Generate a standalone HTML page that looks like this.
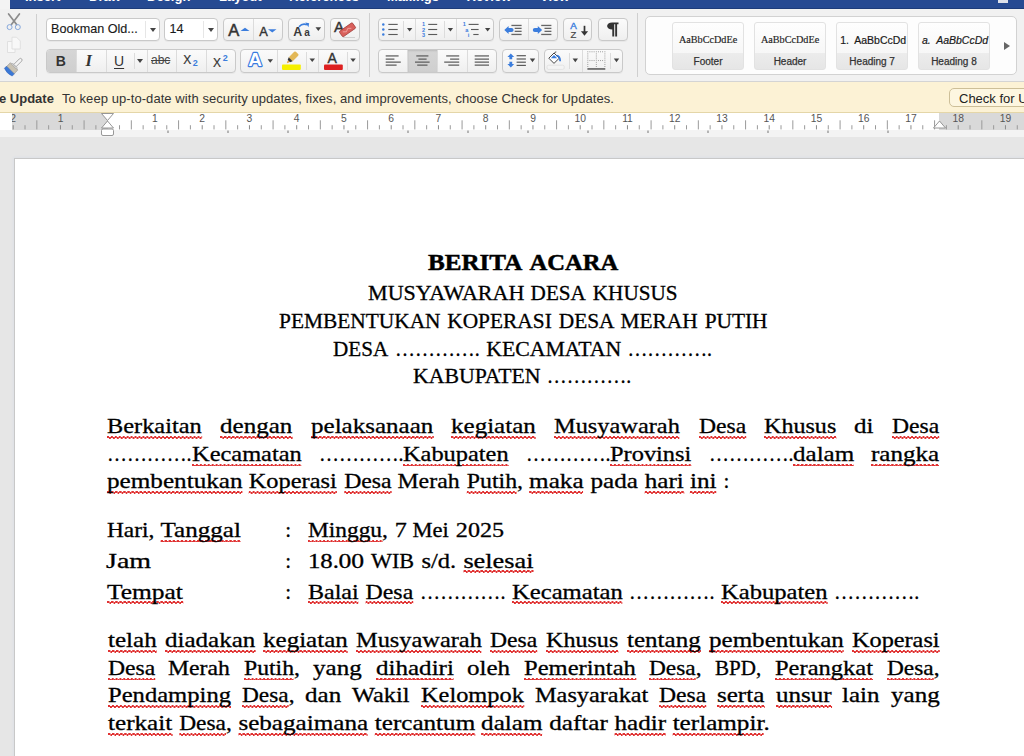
<!DOCTYPE html>
<html><head><meta charset="utf-8">
<style>
*{box-sizing:border-box}
html,body{margin:0;padding:0}
body{width:1024px;height:756px;overflow:hidden;position:relative;background:#e6e6e6;font-family:"Liberation Sans",sans-serif}
.a{position:absolute}
#topl{left:0;top:0;width:10px;height:9px;background:#f3f3f3}
#top{left:10px;top:0;width:1014px;height:9px;background:#264a92;border-bottom:1px solid #1d3c7a;overflow:hidden}
#top span{position:absolute;top:-11.2px;color:#fff;font-size:13px;font-weight:bold}
#ribbon{left:0;top:9px;width:1024px;height:73px;background:#f1f1f1;border-bottom:1px solid #d4d4d4}
.btn{position:absolute;border:1px solid #c9c9c9;border-radius:4px;background:linear-gradient(#fbfbfb,#efefef);box-shadow:0 1px 0 rgba(0,0,0,0.04)}
.sep{position:absolute;width:1px;background:#dcdcdc}
.vsep{position:absolute;width:1px;background:#cfcfcf}
.pressed{position:absolute;background:linear-gradient(#d6d6d6,#cfcfcf)}
#update{left:0;top:82px;width:1024px;height:31px;background:#fcf2d5;border-bottom:1px solid #e4d6a8}
#ruler{left:0;top:113px;width:1024px;height:17px;background:#fff}
#band{z-index:-0;left:0;top:130px;width:1024px;height:7px;background:#f3f3f3}
#page{left:14px;top:158px;width:1020px;height:600px;background:#fff;border-left:1px solid #c8c8c8;border-top:1px solid #c8c8c8;box-shadow:-1px -1px 2px #dde1e6}
.rt{font-family:"Liberation Sans",sans-serif;white-space:nowrap;line-height:1}
.arr{position:absolute;width:0;height:0;border-left:3.5px solid transparent;border-right:3.5px solid transparent;border-top:4px solid #444}
.dl{position:absolute;display:flex;white-space:nowrap;font-family:"Liberation Serif",serif;color:#000;-webkit-text-stroke:0.3px #000}
.dl b{display:flex;font-weight:inherit;flex:none}
.dl s{display:block;text-decoration:none;flex:none}
.dl i{display:inline-block;font-style:normal;transform-origin:0 50%}
.dl u{text-decoration:none;padding-bottom:0.3px;background:linear-gradient(90deg,#e03333 50%,transparent 50%) 0 calc(100% - 1.2px)/3.4px 1.5px repeat-x,linear-gradient(90deg,transparent 50%,#e03333 50%) 0 calc(100% - 0.2px)/3.4px 1.5px repeat-x}
.ln{position:absolute;font-family:"Liberation Serif",serif;font-size:21px;line-height:24px;white-space:nowrap;color:#000;transform-origin:0 0}
</style></head><body>
<div class="a" id="topl"></div>
<div class="a" id="top">
 <span style="left:15px">Insert</span>
 <span style="left:79px">Draw</span>
 <span style="left:137px">Design</span>
 <span style="left:209px">Layout</span>
 <span style="left:279px">References</span>
 <span style="left:377px">Mailings</span>
 <span style="left:456.5px">Review</span>
 <span style="left:530px">View</span>
 <i style="position:absolute;left:988px;top:0;width:10px;height:2.7px;background:#dde1ea"></i>
</div>
<div class="a" id="ribbon"></div>
<!-- clipboard -->
<svg class="a" style="left:0;top:9px" width="40" height="72" viewBox="0 9 40 72">
 <path d="M8.6 14 L16.6 24.6" stroke="#8c8c8c" stroke-width="1.7" stroke-linecap="round"/>
 <path d="M19.4 14 L11.4 24.6" stroke="#8c8c8c" stroke-width="1.7" stroke-linecap="round"/>
 <circle cx="9.6" cy="27.1" r="2.5" fill="none" stroke="#86a8dc" stroke-width="1"/>
 <circle cx="17.8" cy="27.1" r="2.5" fill="none" stroke="#86a8dc" stroke-width="1"/>
 <g fill="#f8f8f8" stroke="#dedede" stroke-width="0.9"><path d="M7.5 41.5h7.5v11h-7.5z"/><path d="M12 37.2h4.5l3.8 3.8v8h-8.3z"/></g>
 <g transform="translate(12 68.5) rotate(45)">
  <path d="M-5.5 2 h11 v3.2 q-5.5 2.2 -11 0z" fill="#3a78d6" stroke="#2c60b8" stroke-width="0.5"/>
  <path d="M-5.2 -3 h10.4 v5 h-10.4z" fill="#c9c2b2" stroke="#8f8f8f" stroke-width="0.6"/>
  <path d="M-3.5 -4.2 h7 v1.4 h-7z" fill="#e4e4e4" stroke="#8f8f8f" stroke-width="0.5"/>
  <path d="M-1.6 -12 a1.6 1.6 0 0 1 3.2 0 v7.8 h-3.2z" fill="#f4f4f4" stroke="#8f8f8f" stroke-width="0.7"/>
 </g>
</svg>
<div class="vsep" style="left:36px;top:14px;height:63px"></div>
<!-- row1 -->
<div class="btn" style="left:46px;top:18px;width:114px;height:23px;background:#fff"></div>
<div class="sep" style="left:145px;top:21px;height:17px;background:#e6e6e6"></div>
<div class="a rt" style="left:51px;top:22.5px;font-size:12.6px;color:#1a1a1a;-webkit-text-stroke:0.15px #1a1a1a">Bookman Old...</div>
<div class="arr" style="left:149.5px;top:28px"></div>
<div class="btn" style="left:164px;top:18px;width:54px;height:23px;background:#fff"></div>
<div class="sep" style="left:203px;top:21px;height:17px;background:#e6e6e6"></div>
<div class="a rt" style="left:169.5px;top:22.5px;font-size:12.6px;color:#1a1a1a;-webkit-text-stroke:0.15px #1a1a1a">14</div>
<div class="arr" style="left:207.5px;top:28px"></div>
<div class="btn" style="left:223px;top:18px;width:60px;height:23px"></div>
<div class="sep" style="left:253px;top:19px;height:21px"></div>
<div class="btn" style="left:288px;top:18px;width:37px;height:23px"></div>
<div class="btn" style="left:330px;top:18px;width:30px;height:23px"></div>
<svg class="a" style="left:223px;top:18px" width="140" height="23">
 <text x="5.3" y="17.5" font-family="Liberation Sans" font-size="16.5" fill="#333" stroke="#333" stroke-width="0.5">A</text>
 <path d="M17.5 13h9l-4.5-3.3z" fill="#3b7ddd"/>
 <text x="36.2" y="17.5" font-family="Liberation Sans" font-size="12.8" fill="#333" stroke="#333" stroke-width="0.4">A</text>
 <path d="M45 11.2h8.5l-4.25 3.3z" fill="#3b7ddd"/>
 <text x="70.3" y="18" font-family="Liberation Sans" font-size="12.4" font-weight="bold" fill="#3a3a3a">A</text>
 <text x="81.3" y="18" font-family="Liberation Sans" font-size="10" font-weight="bold" fill="#3a3a3a">a</text>
 <path d="M76 8.8 q3.5 -4 8 -2" fill="none" stroke="#3b7ddd" stroke-width="1.6"/>
 <path d="M82.3 4.6l3.8 0.6-0.6 4z" fill="#3b7ddd"/>
 <path d="M92.5 9.3h5.6l-2.8 3.6z" fill="#444"/>
 <text x="111" y="13.8" font-family="Liberation Sans" font-size="15" fill="#333" stroke="#333" stroke-width="0.4">A</text>
 <g transform="translate(124.5 11.8) rotate(-35)"><rect x="-8" y="-3.3" width="16" height="6.6" rx="1" fill="#d9605c" stroke="#9c3a36" stroke-width="0.7"/><path d="M-5 -1l3 2 3-2 3 2" fill="none" stroke="#f0a8a4" stroke-width="0.8"/></g>
 <path d="M120 19.5h12" stroke="#c8c8c8" stroke-width="0.8"/>
</svg>
<div class="vsep" style="left:369px;top:13px;height:64px"></div>
<div class="btn" style="left:378px;top:18px;width:116px;height:23px"></div>
<div class="sep" style="left:403px;top:21px;height:17px"></div>
<div class="sep" style="left:415px;top:19px;height:21px"></div>
<div class="sep" style="left:444px;top:21px;height:17px"></div>
<div class="sep" style="left:456px;top:19px;height:21px"></div>
<div class="btn" style="left:499px;top:18px;width:59px;height:23px"></div>
<div class="sep" style="left:528px;top:19px;height:21px"></div>
<div class="btn" style="left:563px;top:18px;width:29px;height:23px"></div>
<div class="btn" style="left:598px;top:18px;width:30px;height:23px"></div>
<div class="vsep" style="left:637px;top:13px;height:64px"></div>
<div class="a" style="left:645px;top:15.5px;width:372px;height:59px;background:#fdfdfd;border:1px solid #d2d2d2;border-radius:5px"></div>
<div class="a" style="left:672.3px;top:21.7px;width:71.5px;height:48px;border-radius:3px;border:1px solid #e2e2e2;background:linear-gradient(#fefefe,#f7f7f7 65%,#ececec 65%,#e6e6e6);overflow:hidden"><div class="a" style="left:0;width:69.5px;top:11.5px;text-align:center;font-family:'Liberation Serif',serif;font-size:10.2px;line-height:12px;color:#222;-webkit-text-stroke:0.15px #222">AaBbCcDdEe</div><div class="a" style="left:0;width:69.5px;top:33.5px;text-align:center;font-family:'Liberation Sans',sans-serif;font-size:10px;line-height:12px;color:#333;-webkit-text-stroke:0.25px #333">Footer</div></div>
<div class="a" style="left:754.3px;top:21.7px;width:71.5px;height:48px;border-radius:3px;border:1px solid #e2e2e2;background:linear-gradient(#fefefe,#f7f7f7 65%,#ececec 65%,#e6e6e6);overflow:hidden"><div class="a" style="left:0;width:69.5px;top:11.5px;text-align:center;font-family:'Liberation Serif',serif;font-size:10.2px;line-height:12px;color:#222;-webkit-text-stroke:0.15px #222">AaBbCcDdEe</div><div class="a" style="left:0;width:69.5px;top:33.5px;text-align:center;font-family:'Liberation Sans',sans-serif;font-size:10px;line-height:12px;color:#333;-webkit-text-stroke:0.25px #333">Header</div></div>
<div class="a" style="left:836.4px;top:21.7px;width:71.5px;height:48px;border-radius:3px;border:1px solid #e2e2e2;background:linear-gradient(#fefefe,#f7f7f7 65%,#ececec 65%,#e6e6e6);overflow:hidden"><div class="a" style="left:2.8px;top:11px;white-space:nowrap;font-family:'Liberation Sans',sans-serif;font-size:10.5px;line-height:13px;color:#1a1a1a;-webkit-text-stroke:0.2px #1a1a1a">1.&nbsp; AaBbCcDd</div><div class="a" style="left:0;width:69.5px;top:33.5px;text-align:center;font-family:'Liberation Sans',sans-serif;font-size:10px;line-height:12px;color:#333;-webkit-text-stroke:0.25px #333">Heading 7</div></div>
<div class="a" style="left:918.2px;top:21.7px;width:71.5px;height:48px;border-radius:3px;border:1px solid #e2e2e2;background:linear-gradient(#fefefe,#f7f7f7 65%,#ececec 65%,#e6e6e6);overflow:hidden"><div class="a" style="left:2.8px;top:11px;white-space:nowrap;font-family:'Liberation Sans',sans-serif;font-size:10.5px;line-height:13px;color:#1a1a1a;-webkit-text-stroke:0.2px #1a1a1a"><i>a.&nbsp; AaBbCcDd</i></div><div class="a" style="left:0;width:69.5px;top:33.5px;text-align:center;font-family:'Liberation Sans',sans-serif;font-size:10px;line-height:12px;color:#333;-webkit-text-stroke:0.25px #333">Heading 8</div></div>
<div class="a" style="left:1004px;top:41.5px;width:0;height:0;border-top:4px solid transparent;border-bottom:4px solid transparent;border-left:6.5px solid #666"></div>
<!-- row2 -->
<div class="btn" style="left:46px;top:49px;width:190px;height:24px"></div>
<div class="pressed" style="left:47px;top:50px;width:29px;height:22px;border-radius:3px 0 0 3px"></div>
<div class="sep" style="left:76px;top:50px;height:22px"></div>
<div class="sep" style="left:106px;top:50px;height:22px"></div>
<div class="sep" style="left:134px;top:53px;height:16px"></div>
<div class="sep" style="left:147px;top:50px;height:22px"></div>
<div class="sep" style="left:176px;top:50px;height:22px"></div>
<div class="sep" style="left:206px;top:50px;height:22px"></div>
<div class="btn" style="left:240px;top:49px;width:120px;height:24px"></div>
<div class="sep" style="left:277px;top:50px;height:22px"></div>
<div class="sep" style="left:306px;top:52px;height:18px"></div>
<div class="sep" style="left:318px;top:50px;height:22px"></div>
<div class="sep" style="left:347px;top:52px;height:18px"></div>
<div class="btn" style="left:378px;top:49px;width:119px;height:24px"></div>
<div class="pressed" style="left:408px;top:50px;width:30px;height:22px;box-shadow:inset 0 1px 2px rgba(0,0,0,0.12)"></div>
<div class="sep" style="left:407px;top:50px;height:22px"></div>
<div class="sep" style="left:437px;top:50px;height:22px"></div>
<div class="sep" style="left:467px;top:50px;height:22px"></div>
<div class="btn" style="left:502px;top:49px;width:37px;height:24px"></div>
<div class="btn" style="left:544px;top:49px;width:79px;height:24px"></div>
<div class="sep" style="left:569px;top:53px;height:16px"></div>
<div class="sep" style="left:582px;top:50px;height:22px"></div>
<div class="sep" style="left:610px;top:53px;height:16px"></div>
<div class="a rt" style="left:55.8px;top:53.8px;font-size:14px;font-weight:bold;color:#333">B</div>
<div class="a" style="left:85.6px;top:52.5px;font-family:'Liberation Serif',serif;font-style:italic;font-weight:bold;font-size:16.5px;line-height:1;color:#333">I</div>
<div class="a rt" style="left:114px;top:54px;font-size:14px;color:#333;text-decoration:underline;text-underline-offset:2px">U</div>
<div class="arr" style="left:137px;top:59px"></div>
<div class="a rt" style="left:151px;top:54px;font-size:12px;color:#444;text-decoration:line-through">abc</div>
<div class="a rt" style="left:183.3px;top:53.6px;font-size:12px;color:#333;-webkit-text-stroke:0.2px #333">X<span style="font-size:9px;color:#3b7ddd;font-weight:bold;position:relative;top:2.9px;left:1.5px;-webkit-text-stroke:0">2</span></div>
<div class="a rt" style="left:213px;top:56.5px;font-size:12px;color:#333;-webkit-text-stroke:0.2px #333">X<span style="font-size:9px;color:#3b7ddd;font-weight:bold;position:relative;top:-5.6px;left:1.8px;-webkit-text-stroke:0">2</span></div>
<svg class="a" style="left:240px;top:49px" width="120" height="24">
 <text x="8.3" y="17.4" font-family="Liberation Sans" font-size="19" font-weight="bold" fill="#fff" stroke="#3a7be0" stroke-width="2.3" paint-order="stroke" stroke-linejoin="round">A</text>
 <path d="M27.6 10.3h5.4l-2.7 3.5z" fill="#444"/>
 <g transform="translate(53.5 7.5) rotate(45)"><rect x="-2.8" y="-5" width="5.6" height="9" rx="1.2" fill="#e3b857"/><path d="M-2.8 4h5.6l-1.2 2.6h-3.2z" fill="#333"/><path d="M-1 6.6h2l-0.4 2.2h-1.2z" fill="#e09a40"/></g>
 <rect x="42" y="15.6" width="18.8" height="5.3" rx="0.8" fill="#f5ef00"/>
 <path d="M69.5 9.5h5.5l-2.75 3.5z" fill="#444"/>
 <text x="87.5" y="13.6" font-family="Liberation Sans" font-size="14" fill="#333" stroke="#333" stroke-width="0.4">A</text>
 <rect x="84" y="15.6" width="18.8" height="5.3" rx="1" fill="#dd2020"/>
 <path d="M110.3 9.5h5.5l-2.75 3.5z" fill="#444"/>
</svg>
<svg class="a" style="left:378px;top:49px" width="245" height="24" fill="#555">
 <g fill="#5e5e5e"><rect x="7.7" y="6.3" width="12.9" height="1.25"/><rect x="7.7" y="9.5" width="8.7" height="1.25"/><rect x="7.7" y="12.5" width="15.1" height="1.25"/><rect x="7.7" y="15.5" width="10.9" height="1.25"/><rect x="38.3" y="6.3" width="12.1" height="1.25"/><rect x="40.4" y="9.5" width="8.2" height="1.25"/><rect x="37.0" y="12.5" width="14.6" height="1.25"/><rect x="39.2" y="15.5" width="10.3" height="1.25"/><rect x="68.2" y="6.3" width="13.0" height="1.25"/><rect x="72.1" y="9.5" width="9.1" height="1.25"/><rect x="66.2" y="12.5" width="15.0" height="1.25"/><rect x="70.3" y="15.5" width="10.9" height="1.25"/><rect x="96.7" y="6.3" width="14.3" height="1.25"/><rect x="96.7" y="9.5" width="14.3" height="1.25"/><rect x="96.7" y="12.5" width="14.3" height="1.25"/><rect x="96.7" y="15.5" width="14.3" height="1.25"/></g>
 <path d="M132.8 4.6 L136.2 8 L134.2 8 L134.2 10.2 L131.4 10.2 L131.4 8 L129.4 8z M132.8 18.4 L136.2 15 L134.2 15 L134.2 12.8 L131.4 12.8 L131.4 15 L129.4 15z" fill="#3b7ddd"/>
 <g fill="#5a5a5a"><rect x="138.6" y="6.1" width="9.3" height="1.2"/><rect x="138.6" y="9.4" width="9.3" height="1.2"/><rect x="138.6" y="12.6" width="9.3" height="1.2"/><rect x="138.6" y="15.8" width="9.3" height="1.2"/></g>
 <path d="M151.8 9.6h5.4l-2.7 3.6z" fill="#444"/>
 <path d="M170.8 9.2 L176 4 L181.2 9.2 L176 14.4z" fill="#fff" stroke="#444" stroke-width="1"/>
 <path d="M176.5 4.5 q0.5 -2.2 1.8 -1.6" fill="none" stroke="#444" stroke-width="0.9"/>
 <path d="M178.6 6.6 q3.4 0.2 3.6 5.6" fill="none" stroke="#3b7ddd" stroke-width="1.8"/>
 <path d="M172.8 9.2 L176 6 L179.2 9.2z" fill="#3b7ddd"/>
 <rect x="169" y="16.2" width="17.2" height="4.2" rx="1.5" fill="#f4f4f4" stroke="#d8d8d8" stroke-width="0.6"/>
 <path d="M194.6 9.6h5.4l-2.7 3.6z" fill="#444"/>
 <g fill="#8a8a8a"><rect x="209.35" y="2.35" width="0.9" height="0.9"/><rect x="209.35" y="4.45" width="0.9" height="0.9"/><rect x="209.35" y="6.55" width="0.9" height="0.9"/><rect x="209.35" y="8.65" width="0.9" height="0.9"/><rect x="209.35" y="10.75" width="0.9" height="0.9"/><rect x="209.35" y="12.85" width="0.9" height="0.9"/><rect x="209.35" y="14.95" width="0.9" height="0.9"/><rect x="209.35" y="17.05" width="0.9" height="0.9"/><rect x="217.85" y="2.35" width="0.9" height="0.9"/><rect x="217.85" y="4.45" width="0.9" height="0.9"/><rect x="217.85" y="6.55" width="0.9" height="0.9"/><rect x="217.85" y="8.65" width="0.9" height="0.9"/><rect x="217.85" y="10.75" width="0.9" height="0.9"/><rect x="217.85" y="12.85" width="0.9" height="0.9"/><rect x="217.85" y="14.95" width="0.9" height="0.9"/><rect x="217.85" y="17.05" width="0.9" height="0.9"/><rect x="226.45" y="2.35" width="0.9" height="0.9"/><rect x="226.45" y="4.45" width="0.9" height="0.9"/><rect x="226.45" y="6.55" width="0.9" height="0.9"/><rect x="226.45" y="8.65" width="0.9" height="0.9"/><rect x="226.45" y="10.75" width="0.9" height="0.9"/><rect x="226.45" y="12.85" width="0.9" height="0.9"/><rect x="226.45" y="14.95" width="0.9" height="0.9"/><rect x="226.45" y="17.05" width="0.9" height="0.9"/><rect x="211.45" y="2.35" width="0.9" height="0.9"/><rect x="213.55" y="2.35" width="0.9" height="0.9"/><rect x="215.65" y="2.35" width="0.9" height="0.9"/><rect x="219.95" y="2.35" width="0.9" height="0.9"/><rect x="222.05" y="2.35" width="0.9" height="0.9"/><rect x="224.15" y="2.35" width="0.9" height="0.9"/><rect x="211.45" y="11.15" width="0.9" height="0.9"/><rect x="213.55" y="11.15" width="0.9" height="0.9"/><rect x="215.65" y="11.15" width="0.9" height="0.9"/><rect x="219.95" y="11.15" width="0.9" height="0.9"/><rect x="222.05" y="11.15" width="0.9" height="0.9"/><rect x="224.15" y="11.15" width="0.9" height="0.9"/></g>
 <rect x="209.4" y="19.2" width="17.9" height="1.5" fill="#555"/>
 <path d="M235.8 9.6h5.4l-2.7 3.6z" fill="#444"/>
</svg>
<!-- row1 icons -->
<svg class="a" style="left:378px;top:18px" width="250" height="23" fill="#555">
 <g fill="#3b7ddd"><circle cx="5.3" cy="6.4" r="1.25"/><circle cx="5.3" cy="11.5" r="1.25"/><circle cx="5.3" cy="16.5" r="1.25"/></g>
 <g fill="#5a5a5a"><rect x="10.3" y="5.85" width="9.4" height="1.1"/><rect x="10.3" y="10.95" width="9.4" height="1.1"/><rect x="10.3" y="15.95" width="9.4" height="1.1"/></g>
 <path d="M29 10h5.3l-2.65 3.6z" fill="#444"/>
 <g fill="#3b7ddd" font-family="Liberation Sans" font-size="5.6" font-weight="bold" text-anchor="middle"><text x="45.5" y="8.4">1</text><text x="45.5" y="13.5">2</text><text x="45.5" y="18.5">3</text></g>
 <g fill="#5a5a5a"><rect x="50.2" y="5.85" width="9" height="1.1"/><rect x="50.2" y="10.95" width="9" height="1.1"/><rect x="50.2" y="15.95" width="9" height="1.1"/></g>
 <path d="M69.8 10h5.3l-2.65 3.6z" fill="#444"/>
 <g fill="#3b7ddd" font-family="Liberation Sans" font-size="5.6" font-weight="bold" text-anchor="middle"><text x="86.2" y="8.4">1</text><text x="88.9" y="13.5">a</text><text x="90.6" y="18.5">i</text></g>
 <g fill="#5a5a5a"><rect x="90.6" y="5.85" width="10" height="1.1"/><rect x="93" y="10.95" width="7.6" height="1.1"/><rect x="95.3" y="15.95" width="5.3" height="1.1"/></g>
 <path d="M107 10h5.3l-2.65 3.6z" fill="#444"/>
 <g fill="#666"><rect x="133.4" y="6.8" width="10.2" height="1.3"/><rect x="136.7" y="9.7" width="6.9" height="1.3"/><rect x="136.7" y="12.7" width="6.9" height="1.3"/><rect x="133.4" y="15.8" width="10.2" height="1.3"/></g>
 <path d="M126.3 12 L130.6 7.9 V9.9 H133.5 a2.1 2.1 0 0 1 0 4.2 H130.6 V16.1z" fill="#3b7ddd"/>
 <g fill="#666"><rect x="163.2" y="6.8" width="10.2" height="1.3"/><rect x="166.5" y="9.7" width="6.9" height="1.3"/><rect x="166.5" y="12.7" width="6.9" height="1.3"/><rect x="163.2" y="15.8" width="10.2" height="1.3"/></g>
 <path d="M164.1 12 L159.8 7.9 V9.9 H156.9 a2.1 2.1 0 0 0 0 4.2 H159.8 V16.1z" fill="#3b7ddd"/>
 <g transform="translate(185 0)"><text x="7.3" y="10.8" font-family="Liberation Sans" font-size="9.8" fill="#3b7ddd" stroke="#3b7ddd" stroke-width="0.4">A</text><text x="7.6" y="20.2" font-family="Liberation Sans" font-size="9.5" fill="#444" stroke="#444" stroke-width="0.2">Z</text><path d="M21.5 7.8v7" stroke="#333" stroke-width="1.7"/><path d="M17.9 13.2l3.6 4.5 3.6-4.5z" fill="#333"/></g>
 <g transform="translate(220 0)"><path d="M13 4.5h7.5v1.8h-1.4v12.3h-1.9v-12.3h-1v12.3h-1.9v-7c-3.2 0-5.2-1.8-5.2-3.6s2-3.5 5-3.5z" fill="#333"/></g>
</svg>
<div class="a" id="update"></div>
<div class="a rt" style="left:-1px;top:92px;font-size:13px;font-weight:bold;color:#333">e Update</div>
<div class="a rt" style="left:62px;top:92px;font-size:13px;color:#333;letter-spacing:0.07px">To keep up-to-date with security updates, fixes, and improvements, choose Check for Updates.</div>
<div class="a" style="left:949px;top:88px;width:90px;height:19px;border:1px solid #cdbf98;border-radius:5px;background:#fdf6e0"></div>
<div class="a rt" style="left:959px;top:92px;font-size:13px;color:#222">Check for U</div>
<div class="a" id="band"></div>
<div class="a" id="ruler"></div>
<div class="a" style="left:12px;top:113px;width:95.5px;height:16.5px;background:#d9d9d9"></div>
<div class="a" style="left:939px;top:113px;width:85px;height:16.5px;background:#d9d9d9"></div>
<svg class="a" style="left:0;top:113px" width="1024" height="24">
<rect x="12.70" y="12.2" width="1" height="4.2" fill="#8a8a8a"/>
<rect x="24.51" y="12.2" width="1" height="4.2" fill="#9a9a9a"/>
<rect x="36.33" y="7.3" width="1" height="9.1" fill="#9a9a9a"/>
<rect x="48.14" y="12.2" width="1" height="4.2" fill="#9a9a9a"/>
<rect x="59.95" y="12.2" width="1" height="4.2" fill="#8a8a8a"/>
<rect x="71.76" y="12.2" width="1" height="4.2" fill="#9a9a9a"/>
<rect x="83.58" y="7.3" width="1" height="9.1" fill="#9a9a9a"/>
<rect x="95.39" y="12.2" width="1" height="4.2" fill="#9a9a9a"/>
<rect x="119.01" y="12.2" width="1" height="4.2" fill="#9a9a9a"/>
<rect x="130.82" y="7.3" width="1" height="9.1" fill="#9a9a9a"/>
<rect x="142.64" y="12.2" width="1" height="4.2" fill="#9a9a9a"/>
<rect x="154.45" y="12.2" width="1" height="4.2" fill="#8a8a8a"/>
<rect x="166.26" y="12.2" width="1" height="4.2" fill="#9a9a9a"/>
<rect x="178.07" y="7.3" width="1" height="9.1" fill="#9a9a9a"/>
<rect x="189.89" y="12.2" width="1" height="4.2" fill="#9a9a9a"/>
<rect x="201.70" y="12.2" width="1" height="4.2" fill="#8a8a8a"/>
<rect x="213.51" y="12.2" width="1" height="4.2" fill="#9a9a9a"/>
<rect x="225.32" y="7.3" width="1" height="9.1" fill="#9a9a9a"/>
<rect x="237.14" y="12.2" width="1" height="4.2" fill="#9a9a9a"/>
<rect x="248.95" y="12.2" width="1" height="4.2" fill="#8a8a8a"/>
<rect x="260.76" y="12.2" width="1" height="4.2" fill="#9a9a9a"/>
<rect x="272.57" y="7.3" width="1" height="9.1" fill="#9a9a9a"/>
<rect x="284.39" y="12.2" width="1" height="4.2" fill="#9a9a9a"/>
<rect x="296.20" y="12.2" width="1" height="4.2" fill="#8a8a8a"/>
<rect x="308.01" y="12.2" width="1" height="4.2" fill="#9a9a9a"/>
<rect x="319.82" y="7.3" width="1" height="9.1" fill="#9a9a9a"/>
<rect x="331.64" y="12.2" width="1" height="4.2" fill="#9a9a9a"/>
<rect x="343.45" y="12.2" width="1" height="4.2" fill="#8a8a8a"/>
<rect x="355.26" y="12.2" width="1" height="4.2" fill="#9a9a9a"/>
<rect x="367.07" y="7.3" width="1" height="9.1" fill="#9a9a9a"/>
<rect x="378.89" y="12.2" width="1" height="4.2" fill="#9a9a9a"/>
<rect x="390.70" y="12.2" width="1" height="4.2" fill="#8a8a8a"/>
<rect x="402.51" y="12.2" width="1" height="4.2" fill="#9a9a9a"/>
<rect x="414.32" y="7.3" width="1" height="9.1" fill="#9a9a9a"/>
<rect x="426.14" y="12.2" width="1" height="4.2" fill="#9a9a9a"/>
<rect x="437.95" y="12.2" width="1" height="4.2" fill="#8a8a8a"/>
<rect x="449.76" y="12.2" width="1" height="4.2" fill="#9a9a9a"/>
<rect x="461.57" y="7.3" width="1" height="9.1" fill="#9a9a9a"/>
<rect x="473.39" y="12.2" width="1" height="4.2" fill="#9a9a9a"/>
<rect x="485.20" y="12.2" width="1" height="4.2" fill="#8a8a8a"/>
<rect x="497.01" y="12.2" width="1" height="4.2" fill="#9a9a9a"/>
<rect x="508.82" y="7.3" width="1" height="9.1" fill="#9a9a9a"/>
<rect x="520.64" y="12.2" width="1" height="4.2" fill="#9a9a9a"/>
<rect x="532.45" y="12.2" width="1" height="4.2" fill="#8a8a8a"/>
<rect x="544.26" y="12.2" width="1" height="4.2" fill="#9a9a9a"/>
<rect x="556.08" y="7.3" width="1" height="9.1" fill="#9a9a9a"/>
<rect x="567.89" y="12.2" width="1" height="4.2" fill="#9a9a9a"/>
<rect x="579.70" y="12.2" width="1" height="4.2" fill="#8a8a8a"/>
<rect x="591.51" y="12.2" width="1" height="4.2" fill="#9a9a9a"/>
<rect x="603.33" y="7.3" width="1" height="9.1" fill="#9a9a9a"/>
<rect x="615.14" y="12.2" width="1" height="4.2" fill="#9a9a9a"/>
<rect x="626.95" y="12.2" width="1" height="4.2" fill="#8a8a8a"/>
<rect x="638.76" y="12.2" width="1" height="4.2" fill="#9a9a9a"/>
<rect x="650.58" y="7.3" width="1" height="9.1" fill="#9a9a9a"/>
<rect x="662.39" y="12.2" width="1" height="4.2" fill="#9a9a9a"/>
<rect x="674.20" y="12.2" width="1" height="4.2" fill="#8a8a8a"/>
<rect x="686.01" y="12.2" width="1" height="4.2" fill="#9a9a9a"/>
<rect x="697.83" y="7.3" width="1" height="9.1" fill="#9a9a9a"/>
<rect x="709.64" y="12.2" width="1" height="4.2" fill="#9a9a9a"/>
<rect x="721.45" y="12.2" width="1" height="4.2" fill="#8a8a8a"/>
<rect x="733.26" y="12.2" width="1" height="4.2" fill="#9a9a9a"/>
<rect x="745.08" y="7.3" width="1" height="9.1" fill="#9a9a9a"/>
<rect x="756.89" y="12.2" width="1" height="4.2" fill="#9a9a9a"/>
<rect x="768.70" y="12.2" width="1" height="4.2" fill="#8a8a8a"/>
<rect x="780.51" y="12.2" width="1" height="4.2" fill="#9a9a9a"/>
<rect x="792.33" y="7.3" width="1" height="9.1" fill="#9a9a9a"/>
<rect x="804.14" y="12.2" width="1" height="4.2" fill="#9a9a9a"/>
<rect x="815.95" y="12.2" width="1" height="4.2" fill="#8a8a8a"/>
<rect x="827.76" y="12.2" width="1" height="4.2" fill="#9a9a9a"/>
<rect x="839.58" y="7.3" width="1" height="9.1" fill="#9a9a9a"/>
<rect x="851.39" y="12.2" width="1" height="4.2" fill="#9a9a9a"/>
<rect x="863.20" y="12.2" width="1" height="4.2" fill="#8a8a8a"/>
<rect x="875.01" y="12.2" width="1" height="4.2" fill="#9a9a9a"/>
<rect x="886.83" y="7.3" width="1" height="9.1" fill="#9a9a9a"/>
<rect x="898.64" y="12.2" width="1" height="4.2" fill="#9a9a9a"/>
<rect x="910.45" y="12.2" width="1" height="4.2" fill="#8a8a8a"/>
<rect x="922.26" y="12.2" width="1" height="4.2" fill="#9a9a9a"/>
<rect x="934.08" y="7.3" width="1" height="9.1" fill="#9a9a9a"/>
<rect x="945.89" y="12.2" width="1" height="4.2" fill="#9a9a9a"/>
<rect x="957.70" y="12.2" width="1" height="4.2" fill="#8a8a8a"/>
<rect x="969.51" y="12.2" width="1" height="4.2" fill="#9a9a9a"/>
<rect x="981.33" y="7.3" width="1" height="9.1" fill="#9a9a9a"/>
<rect x="993.14" y="12.2" width="1" height="4.2" fill="#9a9a9a"/>
<rect x="1004.95" y="12.2" width="1" height="4.2" fill="#8a8a8a"/>
<rect x="1016.76" y="12.2" width="1" height="4.2" fill="#9a9a9a"/>
<text x="13.2" y="9.4" text-anchor="middle" font-family="Liberation Sans" font-size="10.3" fill="#555">2</text>
<text x="60.5" y="9.4" text-anchor="middle" font-family="Liberation Sans" font-size="10.3" fill="#555">1</text>
<text x="154.9" y="9.4" text-anchor="middle" font-family="Liberation Sans" font-size="10.3" fill="#555">1</text>
<text x="202.2" y="9.4" text-anchor="middle" font-family="Liberation Sans" font-size="10.3" fill="#555">2</text>
<text x="249.4" y="9.4" text-anchor="middle" font-family="Liberation Sans" font-size="10.3" fill="#555">3</text>
<text x="296.7" y="9.4" text-anchor="middle" font-family="Liberation Sans" font-size="10.3" fill="#555">4</text>
<text x="343.9" y="9.4" text-anchor="middle" font-family="Liberation Sans" font-size="10.3" fill="#555">5</text>
<text x="391.2" y="9.4" text-anchor="middle" font-family="Liberation Sans" font-size="10.3" fill="#555">6</text>
<text x="438.4" y="9.4" text-anchor="middle" font-family="Liberation Sans" font-size="10.3" fill="#555">7</text>
<text x="485.7" y="9.4" text-anchor="middle" font-family="Liberation Sans" font-size="10.3" fill="#555">8</text>
<text x="533.0" y="9.4" text-anchor="middle" font-family="Liberation Sans" font-size="10.3" fill="#555">9</text>
<text x="580.2" y="9.4" text-anchor="middle" font-family="Liberation Sans" font-size="10.3" fill="#555">10</text>
<text x="627.5" y="9.4" text-anchor="middle" font-family="Liberation Sans" font-size="10.3" fill="#555">11</text>
<text x="674.7" y="9.4" text-anchor="middle" font-family="Liberation Sans" font-size="10.3" fill="#555">12</text>
<text x="722.0" y="9.4" text-anchor="middle" font-family="Liberation Sans" font-size="10.3" fill="#555">13</text>
<text x="769.2" y="9.4" text-anchor="middle" font-family="Liberation Sans" font-size="10.3" fill="#555">14</text>
<text x="816.5" y="9.4" text-anchor="middle" font-family="Liberation Sans" font-size="10.3" fill="#555">15</text>
<text x="863.7" y="9.4" text-anchor="middle" font-family="Liberation Sans" font-size="10.3" fill="#555">16</text>
<text x="911.0" y="9.4" text-anchor="middle" font-family="Liberation Sans" font-size="10.3" fill="#555">17</text>
<text x="958.2" y="9.4" text-anchor="middle" font-family="Liberation Sans" font-size="10.3" fill="#555">18</text>
<text x="1005.5" y="9.4" text-anchor="middle" font-family="Liberation Sans" font-size="10.3" fill="#555">19</text>
<rect x="167.5" y="17.5" width="1" height="2.5" fill="#777"/><rect x="227.5" y="17.5" width="1" height="2.5" fill="#777"/><rect x="287.5" y="17.5" width="1" height="2.5" fill="#777"/><rect x="347.5" y="17.5" width="1" height="2.5" fill="#777"/><rect x="407.5" y="17.5" width="1" height="2.5" fill="#777"/><rect x="467.5" y="17.5" width="1" height="2.5" fill="#777"/><rect x="527.5" y="17.5" width="1" height="2.5" fill="#777"/><rect x="587.5" y="17.5" width="1" height="2.5" fill="#777"/><rect x="647.5" y="17.5" width="1" height="2.5" fill="#777"/><rect x="707.5" y="17.5" width="1" height="2.5" fill="#777"/><rect x="767.5" y="17.5" width="1" height="2.5" fill="#777"/><rect x="827.5" y="17.5" width="1" height="2.5" fill="#777"/><rect x="887.5" y="17.5" width="1" height="2.5" fill="#777"/><rect x="0" y="0" width="12" height="16.5" fill="#fff"/></svg>
<svg class="a" style="left:100px;top:112px" width="16" height="25"><path d="M1.5 1.5h12l-6 7z" fill="#fff" stroke="#8c8c8c" stroke-width="0.9"/><path d="M7.5 9l6 7h-12z" fill="#fff" stroke="#8c8c8c" stroke-width="0.9"/><rect x="1.5" y="17" width="12" height="6.5" rx="1.5" fill="#fff" stroke="#8c8c8c" stroke-width="0.9"/></svg>
<svg class="a" style="left:932px;top:112px" width="16" height="20"><path d="M7.5 9l6 7h-12z" fill="#fff" stroke="#8c8c8c" stroke-width="0.9"/></svg>
<div class="a" id="page"></div>
<!--DOC-->
<div class="dl" style="left:428.0px;top:247.90px;width:191.66px;height:28px;font-size:24px;line-height:28px;justify-content:space-between;transform:scaleX(0.9939);transform-origin:0 0;font-weight:bold;-webkit-text-stroke:0.5px #000"><b><s style="width:94.84px"><i style="transform:scaleX(1.0509)">BERITA</i></s></b><b><s style="width:89.32px"><i style="transform:scaleX(1.0306)">ACARA</i></s></b></div>
<div class="dl" style="left:368.4px;top:281.41px;width:308.47px;height:24px;font-size:21px;line-height:24px;justify-content:space-between;transform:scaleX(1.0037);transform-origin:0 0"><b><s style="width:155.87px"><i style="transform:scaleX(1.0472)">MUSYAWARAH</i></s></b><b><s style="width:55.08px"><i style="transform:scaleX(1.0043)">DESA</i></s></b><b><s style="width:84.40px"><i style="transform:scaleX(1.0044)">KHUSUS</i></s></b></div>
<div class="dl" style="left:278.6px;top:308.91px;width:482.13px;height:24px;font-size:21px;line-height:24px;justify-content:space-between;transform:scaleX(1.0134);transform-origin:0 0"><b><s style="width:159.37px"><i style="transform:scaleX(1.0044)">PEMBENTUKAN</i></s></b><b><s style="width:103.15px"><i style="transform:scaleX(1.0045)">KOPERASI</i></s></b><b><s style="width:55.08px"><i style="transform:scaleX(1.0043)">DESA</i></s></b><b><s style="width:76.18px"><i style="transform:scaleX(1.0044)">MERAH</i></s></b><b><s style="width:62.11px"><i style="transform:scaleX(1.0043)">PUTIH</i></s></b></div>
<div class="dl" style="left:333.3px;top:336.71px;width:378.56px;height:24px;font-size:21px;line-height:24px;justify-content:space-between;transform:scaleX(1.0014);transform-origin:0 0"><b><s style="width:55.08px"><i style="transform:scaleX(1.0043)">DESA</i></s></b><b><s style="width:84.52px"><i style="transform:scaleX(0.9470)">………….</i></s></b><b><s style="width:134.76px"><i style="transform:scaleX(1.0353)">KECAMATAN</i></s></b><b><s style="width:84.52px"><i style="transform:scaleX(0.9470)">………….</i></s></b></div>
<div class="dl" style="left:413.3px;top:364.41px;width:218.81px;height:24px;font-size:21px;line-height:24px;justify-content:space-between;transform:scaleX(0.9986);transform-origin:0 0"><b><s style="width:127.73px"><i style="transform:scaleX(1.0391)">KABUPATEN</i></s></b><b><s style="width:84.52px"><i style="transform:scaleX(0.9470)">………….</i></s></b></div>
<div class="dl" style="left:107.4px;top:414.31px;width:832.0px;height:24px;font-size:21px;line-height:24px;justify-content:space-between"><b><s style="width:94.74px"><i style="transform:scaleX(1.1604)"><u>Berkaitan</u></i></s></b><b><s style="width:72.30px"><i style="transform:scaleX(1.1920)"><u>dengan</u></i></s></b><b><s style="width:122.38px"><i style="transform:scaleX(1.1925)"><u>pelaksanaan</u></i></s></b><b><s style="width:84.84px"><i style="transform:scaleX(1.1925)"><u>kegiatan</u></i></s></b><b><s style="width:125.86px"><i style="transform:scaleX(1.1603)"><u>Musyawarah</u></i></s></b><b><s style="width:47.23px"><i style="transform:scaleX(1.1249)"><u>Desa</u></i></s></b><b><s style="width:72.30px"><i style="transform:scaleX(1.1473)"><u>Khusus</u></i></s></b><b><s style="width:19.48px"><i style="transform:scaleX(1.1920)">di</i></s></b><b><s style="width:47.23px"><i style="transform:scaleX(1.1249)"><u>Desa</u></i></s></b></div>
<div class="dl" style="left:107.4px;top:442.11px;width:832.0px;height:24px;font-size:21px;line-height:24px;justify-content:space-between"><b><s style="width:84.52px"><i style="transform:scaleX(0.9470)">………….</i></s><s style="width:109.79px"><i style="transform:scaleX(1.1624)"><u>Kecamatan</u></i></s></b><b><s style="width:84.52px"><i style="transform:scaleX(0.9470)">………….</i></s><s style="width:105.62px"><i style="transform:scaleX(1.1611)"><u>Kabupaten</u></i></s></b><b><s style="width:84.52px"><i style="transform:scaleX(0.9470)">………….</i></s><s style="width:81.32px"><i style="transform:scaleX(1.1614)"><u>Provinsi</u></i></s></b><b><s style="width:84.52px"><i style="transform:scaleX(0.9470)">………….</i></s><s style="width:61.20px"><i style="transform:scaleX(1.1927)"><u>dalam</u></i></s></b><b><s style="width:68.13px"><i style="transform:scaleX(1.1923)"><u>rangka</u></i></s></b></div>
<div class="dl" style="left:107.4px;top:469.41px;width:619.32px;height:24px;font-size:21px;line-height:24px;justify-content:space-between;transform:scaleX(1.0050);transform-origin:0 0"><b><s style="width:134.90px"><i style="transform:scaleX(1.1923)"><u>pembentukan</u></i></s></b><b><s style="width:87.57px"><i style="transform:scaleX(1.1551)"><u>Koperasi</u></i></s></b><b><s style="width:47.23px"><i style="transform:scaleX(1.1249)"><u>Desa</u></i></s></b><b><s style="width:61.86px"><i style="transform:scaleX(1.1286)">Merah</i></s></b><b><s style="width:55.95px"><i style="transform:scaleX(1.1278)"><u>Putih</u>,</i></s></b><b><s style="width:54.24px"><i style="transform:scaleX(1.1924)"><u>maka</u></i></s></b><b><s style="width:47.27px"><i style="transform:scaleX(1.1920)">pada</i></s></b><b><s style="width:38.94px"><i style="transform:scaleX(1.1926)"><u>hari</u></i></s></b><b><s style="width:26.45px"><i style="transform:scaleX(1.1928)"><u>ini</u></i></s></b><b><s style="width:5.84px"><i style="transform:scaleX(1.0000)">:</i></s></b></div>
<div class="dl" style="left:107.0px;top:517.91px;width:133.11px;height:24px;font-size:21px;line-height:24px;justify-content:space-between;transform:scaleX(1.0097);transform-origin:0 0"><b><s style="width:46.91px"><i style="transform:scaleX(1.1018)">Hari,</i></s></b><b><s style="width:79.63px"><i style="transform:scaleX(1.1825)"><u>Tanggal</u></i></s></b></div>
<div class="dl" style="left:285.3px;top:517.91px;width:6.2px;height:24px;font-size:21px;line-height:24px;justify-content:flex-start"><b><s style="width:5.84px"><i style="transform:scaleX(1.0000)">:</i></s></b></div>
<div class="dl" style="left:308.1px;top:517.91px;width:198.74px;height:24px;font-size:21px;line-height:24px;justify-content:space-between;transform:scaleX(0.9857);transform-origin:0 0"><b><s style="width:81.04px"><i style="transform:scaleX(1.1293)"><u>Minggu</u>,</i></s></b><b><s style="width:12.23px"><i style="transform:scaleX(1.1650)">7</i></s></b><b><s style="width:36.85px"><i style="transform:scaleX(1.0892)">Mei</i></s></b><b><s style="width:48.93px"><i style="transform:scaleX(1.1650)">2025</i></s></b></div>
<div class="dl" style="left:106.1px;top:548.51px;width:38.82px;height:24px;font-size:21px;line-height:24px;justify-content:space-between;transform:scaleX(1.1617);transform-origin:0 0"><b><s style="width:38.82px"><i style="transform:scaleX(1.1476)">Jam</i></s></b></div>
<div class="dl" style="left:285.3px;top:548.51px;width:6.2px;height:24px;font-size:21px;line-height:24px;justify-content:flex-start"><b><s style="width:5.84px"><i style="transform:scaleX(1.0000)">:</i></s></b></div>
<div class="dl" style="left:308.1px;top:548.51px;width:214.50px;height:24px;font-size:21px;line-height:24px;justify-content:space-between;transform:scaleX(1.0499);transform-origin:0 0"><b><s style="width:29.44px"><i style="transform:scaleX(1.1214)">18.</i></s><s style="width:24.46px"><i style="transform:scaleX(1.1650)">00</i></s></b><b><s style="width:41.01px"><i style="transform:scaleX(1.0044)">WIB</i></s></b><b><s style="width:33.09px"><i style="transform:scaleX(1.1117)">s/d.</i></s></b><b><s style="width:66.81px"><i style="transform:scaleX(1.1933)"><u>selesai</u></i></s></b></div>
<div class="dl" style="left:107.0px;top:579.51px;width:74.08px;height:24px;font-size:21px;line-height:24px;justify-content:space-between;transform:scaleX(1.0246);transform-origin:0 0"><b><s style="width:74.08px"><i style="transform:scaleX(1.1820)"><u>Tempat</u></i></s></b></div>
<div class="dl" style="left:285.3px;top:579.51px;width:6.2px;height:24px;font-size:21px;line-height:24px;justify-content:flex-start"><b><s style="width:5.84px"><i style="transform:scaleX(1.0000)">:</i></s></b></div>
<div class="dl" style="left:308.1px;top:579.51px;width:605.82px;height:24px;font-size:21px;line-height:24px;justify-content:space-between;transform:scaleX(1.0097);transform-origin:0 0"><b><s style="width:50.24px"><i style="transform:scaleX(1.1334)"><u>Balai</u></i></s></b><b><s style="width:47.23px"><i style="transform:scaleX(1.1249)"><u>Desa</u></i></s></b><b><s style="width:84.52px"><i style="transform:scaleX(0.9470)">………….</i></s></b><b><s style="width:109.79px"><i style="transform:scaleX(1.1624)"><u>Kecamatan</u></i></s></b><b><s style="width:84.52px"><i style="transform:scaleX(0.9470)">………….</i></s></b><b><s style="width:105.62px"><i style="transform:scaleX(1.1611)"><u>Kabupaten</u></i></s></b><b><s style="width:84.52px"><i style="transform:scaleX(0.9470)">………….</i></s></b></div>
<div class="dl" style="left:107.6px;top:628.21px;width:831.8px;height:24px;font-size:21px;line-height:24px;justify-content:space-between"><b><s style="width:48.69px"><i style="transform:scaleX(1.1929)"><u>telah</u></i></s></b><b><s style="width:90.39px"><i style="transform:scaleX(1.1925)"><u>diadakan</u></i></s></b><b><s style="width:84.84px"><i style="transform:scaleX(1.1925)"><u>kegiatan</u></i></s></b><b><s style="width:125.86px"><i style="transform:scaleX(1.1603)"><u>Musyawarah</u></i></s></b><b><s style="width:47.23px"><i style="transform:scaleX(1.1249)"><u>Desa</u></i></s></b><b><s style="width:72.30px"><i style="transform:scaleX(1.1473)"><u>Khusus</u></i></s></b><b><s style="width:73.72px"><i style="transform:scaleX(1.1926)"><u>tentang</u></i></s></b><b><s style="width:134.90px"><i style="transform:scaleX(1.1923)"><u>pembentukan</u></i></s></b><b><s style="width:87.57px"><i style="transform:scaleX(1.1551)"><u>Koperasi</u></i></s></b></div>
<div class="dl" style="left:107.6px;top:656.01px;width:831.8px;height:24px;font-size:21px;line-height:24px;justify-content:space-between"><b><s style="width:47.23px"><i style="transform:scaleX(1.1249)"><u>Desa</u></i></s></b><b><s style="width:61.86px"><i style="transform:scaleX(1.1286)">Merah</i></s></b><b><s style="width:55.95px"><i style="transform:scaleX(1.1278)"><u>Putih</u>,</i></s></b><b><s style="width:48.67px"><i style="transform:scaleX(1.1920)">yang</i></s></b><b><s style="width:77.91px"><i style="transform:scaleX(1.1926)"><u>dihadiri</u></i></s></b><b><s style="width:43.12px"><i style="transform:scaleX(1.1925)">oleh</i></s></b><b><s style="width:111.88px"><i style="transform:scaleX(1.1698)"><u>Pemerintah</u></i></s></b><b><s style="width:52.48px"><i style="transform:scaleX(1.1111)"><u>Desa</u>,</i></s></b><b><s style="width:46.29px"><i style="transform:scaleX(1.0039)">BPD,</i></s></b><b><s style="width:97.95px"><i style="transform:scaleX(1.1663)"><u>Perangkat</u></i></s></b><b><s style="width:52.48px"><i style="transform:scaleX(1.1111)"><u>Desa</u>,</i></s></b></div>
<div class="dl" style="left:107.6px;top:683.31px;width:831.8px;height:24px;font-size:21px;line-height:24px;justify-content:space-between"><b><s style="width:123.00px"><i style="transform:scaleX(1.1714)"><u>Pendamping</u></i></s></b><b><s style="width:52.48px"><i style="transform:scaleX(1.1111)"><u>Desa</u>,</i></s></b><b><s style="width:36.15px"><i style="transform:scaleX(1.1920)">dan</i></s></b><b><s style="width:57.47px"><i style="transform:scaleX(1.1578)">Wakil</i></s></b><b><s style="width:102.86px"><i style="transform:scaleX(1.1602)"><u>Kelompok</u></i></s></b><b><s style="width:113.34px"><i style="transform:scaleX(1.1569)">Masyarakat</i></s></b><b><s style="width:47.23px"><i style="transform:scaleX(1.1249)"><u>Desa</u></i></s></b><b><s style="width:47.31px"><i style="transform:scaleX(1.1929)"><u>serta</u></i></s></b><b><s style="width:55.65px"><i style="transform:scaleX(1.1924)"><u>unsur</u></i></s></b><b><s style="width:37.57px"><i style="transform:scaleX(1.1926)">lain</i></s></b><b><s style="width:48.67px"><i style="transform:scaleX(1.1920)">yang</i></s></b></div>
<div class="dl" style="left:107.6px;top:711.21px;width:659.77px;height:24px;font-size:21px;line-height:24px;justify-content:space-between;transform:scaleX(1.0029);transform-origin:0 0"><b><s style="width:64.00px"><i style="transform:scaleX(1.1930)"><u>terkait</u></i></s></b><b><s style="width:52.48px"><i style="transform:scaleX(1.1111)"><u>Desa</u>,</i></s></b><b><s style="width:129.35px"><i style="transform:scaleX(1.1927)"><u>sebagaimana</u></i></s></b><b><s style="width:100.15px"><i style="transform:scaleX(1.1927)"><u>tercantum</u></i></s></b><b><s style="width:61.20px"><i style="transform:scaleX(1.1927)"><u>dalam</u></i></s></b><b><s style="width:58.41px"><i style="transform:scaleX(1.1928)">daftar</i></s></b><b><s style="width:51.46px"><i style="transform:scaleX(1.1924)"><u>hadir</u></i></s></b><b><s style="width:96.79px"><i style="transform:scaleX(1.1941)"><u>terlampir</u>.</i></s></b></div>
<!--/DOC-->
</body></html>
